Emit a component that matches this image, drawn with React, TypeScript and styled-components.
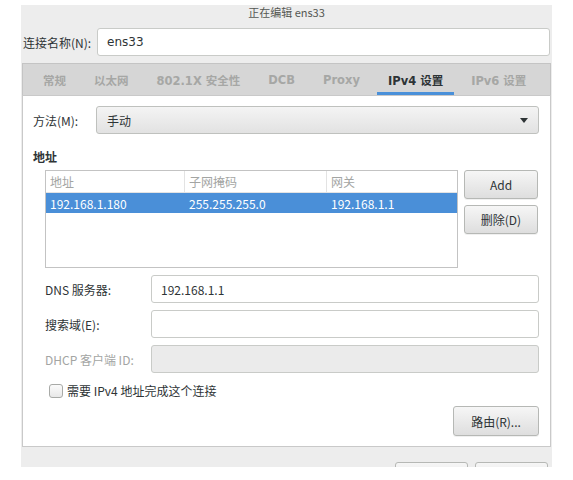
import React from 'react';
import styled, { createGlobalStyle } from 'styled-components';

const GlobalStyle = createGlobalStyle`
    body {
        margin: 0;
        padding-top: 5px;
        background: #ffffff;
        font-family: "Noto Sans CJK SC", "DejaVu Sans", sans-serif;
        font-size: 12px;
        color: #2e3436;
    }
`;

const tabs = ['常规', '以太网', '802.1X 安全性', 'DCB', 'Proxy', 'IPv4 设置', 'IPv6 设置'];
const activeTab = 'IPv4 设置';

const Dialog = styled.div`
    width: 531px;
    height: 462px;
    margin-left: 21px;
    background: #ededed;
    overflow: hidden;
    display: flex;
    flex-direction: column;

    & > * {
        flex-shrink: 0;
    }
`;

const TitleBar = styled.div`
    height: 17px;
    line-height: 15px;
    text-align: center;
    font-size: 11px;
    color: #555753;
`;

const NameRow = styled.div`
    display: flex;
    align-items: center;
    padding: 6px 2px 0 2px;
    gap: 7px;
`;

const Label = styled.span<{ $dim?: boolean; $width?: number }>`
    flex: none;
    width: ${p => (p.$width ? `${p.$width}px` : 'auto')};
    color: ${p => (p.$dim ? '#a3a5a3' : '#2e3436')};
    white-space: nowrap;
`;

const Entry = styled.div<{ $disabled?: boolean; $latin?: boolean }>`
    flex: 1;
    height: 28px;
    box-sizing: border-box;
    border: 1px solid #c9cbc8;
    border-radius: 3px;
    background: ${p => (p.$disabled ? '#ebebeb' : '#ffffff')};
    display: flex;
    align-items: center;
    padding: 0 9px;
    color: #2e3436;
    font-family: ${p => (p.$latin ? '"DejaVu Sans", sans-serif' : 'inherit')};
`;

const Notebook = styled.div`
    margin: 7px 1px 0 1px;
    display: flex;
    flex-direction: column;
`;

const TabBar = styled.div`
    height: 32px;
    box-sizing: border-box;
    background: #d6d6d6;
    border: 1px solid #c4c4c4;
    border-bottom: none;
    display: flex;
    gap: 6px;
    padding-left: 9px;
    overflow: hidden;
`;

const Tab = styled.div<{ $active?: boolean }>`
    flex: none;
    padding: 0 11px;
    display: flex;
    align-items: center;
    white-space: nowrap;
    font-family: "DejaVu Sans", "Noto Sans CJK SC", sans-serif;
    font-weight: bold;
    font-size: 11.5px;
    color: ${p => (p.$active ? '#2e3436' : '#a6a7a5')};
    box-shadow: ${p => (p.$active ? 'inset 0 -3px 0 #4a90d9' : 'none')};
`;

const Panel = styled.div`
    background: #ffffff;
    border: 1px solid #c9c9c9;
    padding: 10px 11px 10px 10px;
    display: flex;
    flex-direction: column;
`;

const MethodRow = styled.div`
    display: flex;
    align-items: center;
`;

const Combo = styled.div`
    flex: 1;
    height: 28px;
    box-sizing: border-box;
    border: 1px solid #bfc1be;
    border-radius: 3px;
    background: linear-gradient(#f4f4f4, #e2e2e2);
    display: flex;
    align-items: center;
    justify-content: space-between;
    padding: 0 10px 0 10px;
`;

const Arrow = styled.span`
    width: 0;
    height: 0;
    border-left: 4px solid transparent;
    border-right: 4px solid transparent;
    border-top: 5px solid #2e3436;
    margin-top: 1px;
`;

const Heading = styled.div`
    margin-top: 15px;
    font-weight: bold;
    line-height: 16px;
`;

const AddressSection = styled.div`
    margin-top: 5px;
    padding-left: 12px;
    display: flex;
    gap: 6px;
`;

const Table = styled.div`
    width: 413px;
    height: 98px;
    box-sizing: border-box;
    border: 1px solid #c3c3c3;
    background: #ffffff;
`;

const TableRow = styled.div<{ $header?: boolean; $selected?: boolean }>`
    display: grid;
    grid-template-columns: 139px 142px 1fr;
    height: ${p => (p.$header ? '21px' : '20px')};
    background: ${p => (p.$selected ? '#4a8fd8' : 'transparent')};
    color: ${p => (p.$header ? '#a3a5a3' : p.$selected ? '#ffffff' : '#2e3436')};
    border-bottom: ${p => (p.$header ? '1px solid #e3e3e3' : 'none')};
`;

const Cell = styled.div<{ $header?: boolean }>`
    display: flex;
    align-items: center;
    padding-left: 4px;
    border-right: ${p => (p.$header ? '1px solid #e3e3e3' : 'none')};

    &:last-child {
        border-right: none;
    }
`;

const ButtonColumn = styled.div`
    display: flex;
    flex-direction: column;
    gap: 6px;
`;

const Button = styled.div<{ $width: number; $height?: number }>`
    width: ${p => p.$width}px;
    height: ${p => p.$height ?? 29}px;
    box-sizing: border-box;
    border: 1px solid #b6b8b5;
    border-radius: 3px;
    background: linear-gradient(#f6f6f6, #dedede);
    box-shadow: 0 1px 0 rgba(0, 0, 0, 0.06);
    display: flex;
    align-items: center;
    justify-content: center;
    color: #2e3436;
`;

const Form = styled.div`
    margin-top: 7px;
    padding-left: 12px;
    display: flex;
    flex-direction: column;
    gap: 7px;
`;

const FormRow = styled.div`
    display: flex;
    align-items: center;
`;

const CheckRow = styled.label`
    margin-top: 9px;
    padding-left: 16px;
    display: flex;
    align-items: center;
    gap: 4px;
`;

const CheckBox = styled.span`
    width: 14px;
    height: 14px;
    box-sizing: border-box;
    border: 1px solid #a8aaa7;
    border-radius: 3px;
    background: linear-gradient(#fbfbfb, #e8e8e8);
`;

const RouteRow = styled.div`
    margin-top: 7px;
    display: flex;
    justify-content: flex-end;
`;

const Footer = styled.div`
    margin-top: 15px;
    padding-right: 4px;
    display: flex;
    justify-content: flex-end;
    gap: 7px;
`;

const formRows = [
    { label: 'DNS 服务器:', value: '192.168.1.1' },
    { label: '搜索域(E):', value: '' },
    { label: 'DHCP 客户端 ID:', value: '', disabled: true },
];

export default function App() {
    return (
        <>
            <GlobalStyle />
            <Dialog>
                <TitleBar>正在编辑 ens33</TitleBar>
                <NameRow>
                    <Label $width={67}>连接名称(N):</Label>
                    <Entry $latin>ens33</Entry>
                </NameRow>
                <Notebook>
                    <TabBar>
                        {tabs.map(t => (
                            <Tab key={t} $active={t === activeTab}>{t}</Tab>
                        ))}
                    </TabBar>
                    <Panel>
                        <MethodRow>
                            <Label $width={63}>方法(M):</Label>
                            <Combo>
                                <span>手动</span>
                                <Arrow />
                            </Combo>
                        </MethodRow>
                        <Heading>地址</Heading>
                        <AddressSection>
                            <Table>
                                <TableRow $header>
                                    <Cell $header>地址</Cell>
                                    <Cell $header>子网掩码</Cell>
                                    <Cell $header>网关</Cell>
                                </TableRow>
                                <TableRow $selected>
                                    <Cell>192.168.1.180</Cell>
                                    <Cell>255.255.255.0</Cell>
                                    <Cell>192.168.1.1</Cell>
                                </TableRow>
                            </Table>
                            <ButtonColumn>
                                <Button $width={74}>Add</Button>
                                <Button $width={74}>删除(D)</Button>
                            </ButtonColumn>
                        </AddressSection>
                        <Form>
                            {formRows.map(r => (
                                <FormRow key={r.label}>
                                    <Label $width={106} $dim={r.disabled}>{r.label}</Label>
                                    <Entry $disabled={r.disabled}>{r.value}</Entry>
                                </FormRow>
                            ))}
                        </Form>
                        <CheckRow>
                            <CheckBox />
                            <span>需要 IPv4 地址完成这个连接</span>
                        </CheckRow>
                        <RouteRow>
                            <Button $width={86} $height={30}>路由(R)...</Button>
                        </RouteRow>
                    </Panel>
                </Notebook>
                <Footer>
                    <Button $width={73} $height={30} />
                    <Button $width={73} $height={30} />
                </Footer>
            </Dialog>
        </>
    );
}
